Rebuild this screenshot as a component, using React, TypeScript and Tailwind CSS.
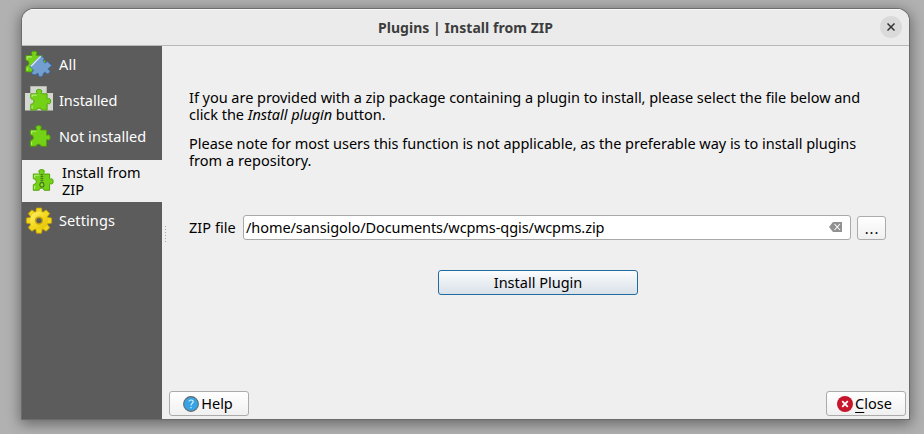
import React from "react";

const PIECE =
  "M8.3 10H13.6C14.9 10 14.6 9.3 14.1 8.4C13.2 6.4 14.8 5.6 16.6 5.6S20 6.4 19.1 8.4C18.6 9.3 18.3 10 19.6 10H24.6V14.6C24.6 15.7 25.2 15.2 25.9 14.9C27.3 14.4 28.2 15.6 28.2 17.4S27.3 20.4 25.9 19.9C25.2 19.6 24.6 19.2 24.6 20.2V26.3H19.6C18.4 26.3 19 25.4 18.5 24.9C17.6 24.1 15.4 24.1 14.6 24.9C14.1 25.4 14.8 26.3 13.6 26.3H8.3V21.2C8.3 20 9 20.3 9.8 20.1C11.8 19.6 11.8 15.7 9.8 15.2C9 15 8.3 15.3 8.3 14.2Z";

function Piece() {
  return (
    <g>
      <path d={PIECE} fill="#73d216" stroke="#4e9a06" strokeWidth=".9" />
      <path d="M9.6 13.8V11.3H14.2M9.6 21.8V25" fill="none" stroke="#b4f07a" strokeWidth="1.1" />
    </g>
  );
}

const iconClass = "block h-[34px] w-[34px] shrink-0";

function AllIcon() {
  return (
    <svg viewBox="0 0 34 34" className={iconClass}>
      <g transform="translate(-4.4 -2.4)">
        <Piece />
      </g>
      <path
        d="M8 18.4L18.7 7.2L21.9 10.4C22.6 11.1 21.4 11.6 21.3 12.6C21.1 14.4 22.9 15.5 24.1 14.6C24.8 14 25 13.2 25.7 13.9L29.6 17.4L26.2 20.6C25.5 21.4 26.4 21.7 27.2 22C28.4 22.6 27.9 24.2 27 25C25.9 26 24.4 26 23.9 25C23.6 24.3 23.2 23.5 22.5 24.2L21.3 25.6C20.6 26.4 21.4 26.7 20.9 27.5C19.9 29 17.5 29 16.6 27.5C16.2 26.7 16.9 26.1 16.1 25.5C15.2 24.9 14.4 26.4 13.3 26.6C11.7 26.8 9.8 26.4 9.8 25C9.8 23.7 11 23.6 11.4 22.8C11.7 22 10.7 21.3 10.1 20.6Z"
        fill="#729fcf"
        stroke="#3b6fae"
        strokeWidth=".9"
      />
      <path d="M8.9 18.3L18.6 8.3" stroke="#dbe9f8" strokeWidth="1.4" />
    </svg>
  );
}

function InstalledIcon() {
  return (
    <svg viewBox="0 0 34 34" className={iconClass}>
      <path d="M8.3 2.3H24.7V9H31V26.6H3V9H8.3Z" fill="#d3d7cf" />
      <g transform="translate(.5 -.2)">
        <Piece />
      </g>
    </svg>
  );
}

function NotInstalledIcon() {
  return (
    <svg viewBox="0 0 34 34" className={iconClass}>
      <Piece />
    </svg>
  );
}

function ZipIcon() {
  return (
    <svg viewBox="0 0 34 34" className={iconClass}>
      <Piece />
      <path d="M16.9 10V19" stroke="#4a7a1c" strokeWidth="2.8" strokeDasharray="1 1" />
      <path d="M16.9 10V19" stroke="#5a8a2a" strokeWidth=".9" />
      <rect x="14.9" y="18.8" width="4" height="4.2" rx="1.7" fill="#8ae234" stroke="#3f6d14" strokeWidth="1.1" />
    </svg>
  );
}

const TEETH = [0, 45, 90, 135, 180, 225, 270, 315];

function GearIcon() {
  return (
    <svg viewBox="0 0 34 34" className={iconClass}>
      <defs>
        <linearGradient id="gold" x1="0" y1="0" x2="1" y2="1">
          <stop offset="0" stopColor="#fff27a" />
          <stop offset=".5" stopColor="#f3da20" />
          <stop offset="1" stopColor="#e0bd00" />
        </linearGradient>
      </defs>
      <g fill="#f2d81c" stroke="#c4a000" strokeWidth=".8">
        {TEETH.map((a) => (
          <path key={a} d="M13.6 9L14.5 4H19.5L20.4 9Z" transform={`rotate(${a} 17 16.6)`} />
        ))}
      </g>
      <circle cx="17" cy="16.6" r="9" fill="url(#gold)" />
      <circle cx="17" cy="16.6" r="4.1" fill="#c9a70a" />
      <circle cx="17" cy="16.6" r="2.7" fill="#5c5c5c" />
    </svg>
  );
}

export default function App() {
  return (
    <div className="h-[434px] w-[924px] overflow-hidden bg-[#b1b1b1] pt-[9px] pl-[22px] font-['Noto_Sans',sans-serif] text-[14.5px] text-black">
      <div className="flex h-[410px] w-[887px] flex-col overflow-hidden rounded-t-[12px] bg-[#efefef] shadow-[0_0_0_1px_#6c6c6c,0_3px_14px_2px_rgba(0,0,0,0.42)]">
        <header className="flex h-[37px] shrink-0 items-center border-b border-[#b8b8b8] bg-[#ebebeb] pr-[7px] pl-[29px] shadow-[inset_0_1px_0_#fafafa]">
          <h1 className="flex-1 text-center text-[14px] font-bold tracking-[0.05px] whitespace-nowrap text-[#3d3d3d]">
            Plugins | Install from ZIP
          </h1>
          <button className="flex h-[22px] w-[22px] items-center justify-center rounded-full bg-[#dadada]">
            <svg viewBox="0 0 8 8" className="h-2 w-2">
              <path d="M.5 .5L7.5 7.5M7.5 .5L.5 7.5" stroke="#333" strokeWidth="1.5" />
            </svg>
          </button>
        </header>
        <div className="flex flex-1">
          <nav className="w-[140px] shrink-0 bg-[#5c5c5c] pt-[2px] leading-[17px] whitespace-nowrap text-white">
            <div className="flex h-9 items-start">
              <AllIcon />
              <span className="mt-2 ml-[3px] tracking-[0.3px]">All</span>
            </div>
            <div className="flex h-9 items-start">
              <InstalledIcon />
              <span className="mt-2 ml-[3px] tracking-[-0.05px]">Installed</span>
            </div>
            <div className="flex h-10 items-start">
              <NotInstalledIcon />
              <span className="mt-2 ml-[3px] tracking-[0.07px]">Not installed</span>
            </div>
            <div className="flex h-[42px] items-start bg-[#efefef] pt-[4px] pl-[3px] text-black">
              <ZipIcon />
              <div className="ml-[3px]">
                <div>Install from</div>
                <div>ZIP</div>
              </div>
            </div>
            <div className="flex h-9 items-start pt-[2px]">
              <GearIcon />
              <span className="mt-2 ml-[3px] tracking-[0.1px]">Settings</span>
            </div>
          </nav>
          <div className="flex w-[7px] shrink-0 items-center justify-center pt-1">
            <div className="h-[17px] w-px bg-[repeating-linear-gradient(#a8a8a8_0_1px,transparent_1px_3px)]" />
          </div>
          <main className="flex flex-1 flex-col pr-[3px] pb-[3px] whitespace-nowrap">
            <div className="pt-[43px] pl-5 leading-[17px]">
              <p className="tracking-[-0.03px]">If you are provided with a zip package containing a plugin to install, please select the file below and</p>
              <p className="tracking-[-0.03px]">
                click the <em>Install plugin</em> button.
              </p>
              <p className="mt-3 tracking-[-0.02px]">Please note for most users this function is not applicable, as the preferable way is to install plugins</p>
              <p className="tracking-[0.05px]">from a repository.</p>
            </div>
            <div className="mt-[46px] flex items-center pr-5 pl-5">
              <label className="w-[54px] tracking-[0.05px]">ZIP file</label>
              <div className="flex h-[25px] w-[608px] items-center rounded-[3px] border border-[#a9a9a9] bg-white pr-[8px] pl-[2px]">
                <span className="flex-1 tracking-[-0.07px]">/home/sansigolo/Documents/wcpms-qgis/wcpms.zip</span>
                <svg viewBox="0 0 13 10" className="mb-[2px] h-[10px] w-[13px]">
                  <path d="M4 0H13V10H4L0 5Z" fill="#919191" />
                  <path d="M5.5 2L11 8M11 2L5.5 8" stroke="#fff" strokeWidth="1.1" />
                </svg>
              </div>
              <button className="ml-[6px] h-6 w-[29px] rounded-[3px] border border-[#ababab] bg-gradient-to-b from-white to-[#f0f0f0] pl-px leading-[20px] tracking-[1px]">
                ...
              </button>
            </div>
            <button className="mt-[30px] ml-[269px] h-[25px] w-[200px] rounded-[3px] border border-[#206c9f] bg-gradient-to-b from-[#fbfcfd] to-[#d9e1e8]">
              Install Plugin
            </button>
            <footer className="mt-auto flex justify-between">
              <button className="flex h-[25px] w-20 items-center justify-center rounded-[3px] border border-[#ababab] bg-gradient-to-b from-white to-[#f0f0f0] pr-[2px]">
                <svg viewBox="0 0 16 16" className="mr-[2px] h-4 w-4">
                  <circle cx="8" cy="8" r="7.4" fill="#36a3e4" stroke="#6b6b6b" strokeWidth="1.1" />
                  <path d="M5.9 5.3C6.4 3.5 10.3 3.5 10.1 5.9C10 7.4 8 7.5 8 9.5M8 11V12.2" fill="none" stroke="#d8effb" strokeWidth="1.2" />
                </svg>
                Help
              </button>
              <button className="flex h-[25px] w-20 items-center justify-center rounded-[3px] border border-[#ababab] bg-gradient-to-b from-white to-[#f0f0f0] pr-[3px]">
                <svg viewBox="0 0 16 16" className="mr-[2px] h-4 w-4">
                  <circle cx="8" cy="8" r="8" fill="#c7162b" />
                  <path d="M5.2 5.2L10.8 10.8M10.8 5.2L5.2 10.8" stroke="#fff" strokeWidth="1.8" />
                </svg>
                <span>
                  <u className="underline-offset-[3px]">C</u>lose
                </span>
              </button>
            </footer>
          </main>
        </div>
      </div>
    </div>
  );
}
